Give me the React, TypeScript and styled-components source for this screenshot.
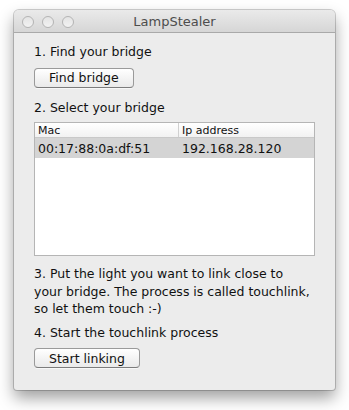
import styled, { createGlobalStyle } from 'styled-components';

type Bridge = {
  mac: string;
  ip: string;
};

const bridges: Bridge[] = [{ mac: '00:17:88:0a:df:51', ip: '192.168.28.120' }];

const GlobalStyle = createGlobalStyle`
  html, body {
    margin: 0;
    padding: 0;
    background: #ffffff;
  }
  body {
    font-family: "DejaVu Sans", "Liberation Sans", sans-serif;
  }
`;

const Page = styled.div`
  padding: 10px 0 0 14px;
  height: 410px;
  box-sizing: border-box;
`;

const Window = styled.div`
  width: 321px;
  height: 380px;
  background: #ececec;
  border-radius: 5px 5px 3px 3px;
  box-shadow: 0 0 0 1px rgba(0, 0, 0, 0.18), 0 8px 16px rgba(0, 0, 0, 0.38);
  display: flex;
  flex-direction: column;
  overflow: hidden;
`;

const TitleBar = styled.div`
  height: 22px;
  flex: none;
  display: flex;
  align-items: center;
  position: relative;
  background: linear-gradient(#eaeaea, #d6d6d6);
  border-bottom: 1px solid #a9a9a9;
`;

const Lights = styled.div`
  display: flex;
  gap: 8px;
  padding-left: 8px;
  padding-top: 1px;
`;

const Light = styled.span`
  width: 10px;
  height: 10px;
  border-radius: 50%;
  border: 1px solid #b4b4b4;
  background: linear-gradient(#e4e4e4, #f2f2f2);
`;

const Title = styled.div`
  position: absolute;
  left: 0;
  right: 0;
  text-align: center;
  font-size: 13px;
  color: #4d4d4d;
  pointer-events: none;
`;

const Content = styled.div`
  padding: 10px 20px 0 20px;
  display: flex;
  flex-direction: column;
  align-items: flex-start;
`;

const Label = styled.div<{ $gap?: number }>`
  font-size: 12.5px;
  line-height: 17.5px;
  color: #111;
  margin-top: ${(p) => p.$gap ?? 0}px;
`;

const Button = styled.button<{ $gap?: number }>`
  margin-top: ${(p) => p.$gap ?? 0}px;
  height: 20px;
  padding: 0 14px;
  font-family: inherit;
  font-size: 12.5px;
  color: #111;
  border: 1px solid #9a9a9a;
  border-bottom-color: #7c7c7c;
  border-radius: 4px;
  background: linear-gradient(#ffffff, #f4f4f4 50%, #eaeaea);
  box-shadow: 0 1px 0 rgba(255, 255, 255, 0.6);
`;

const Table = styled.div`
  margin-top: 6px;
  width: 281px;
  height: 134px;
  box-sizing: border-box;
  background: #fff;
  border: 1px solid #b5b5b5;
`;

const Row = styled.div<{ $header?: boolean; $selected?: boolean }>`
  display: grid;
  grid-template-columns: 143px 1fr;
  height: ${(p) => (p.$header ? 14 : 20)}px;
  align-items: center;
  font-size: ${(p) => (p.$header ? 11 : 12.5)}px;
  color: #111;
  background: ${(p) =>
    p.$header ? 'linear-gradient(#ffffff, #f2f2f2)' : p.$selected ? '#d4d4d4' : 'transparent'};
  border-bottom: ${(p) => (p.$header ? '1px solid #c9c9c9' : 'none')};
`;

const Cell = styled.div<{ $divider?: boolean }>`
  padding-left: 3px;
  height: 100%;
  display: flex;
  align-items: center;
  white-space: nowrap;

  &:nth-child(2) {
    border-left: 1px solid ${(p) => (p.$divider ? '#d0d0d0' : 'transparent')};
  }
`;

export default function App() {
  return (
    <>
      <GlobalStyle />
      <Page>
        <Window>
          <TitleBar>
            <Lights>
              <Light />
              <Light />
              <Light />
            </Lights>
            <Title>LampStealer</Title>
          </TitleBar>
          <Content>
            <Label>1. Find your bridge</Label>
            <Button $gap={7}>Find bridge</Button>
            <Label $gap={11}>2. Select your bridge</Label>
            <Table>
              <Row $header>
                <Cell>Mac</Cell>
                <Cell $divider>Ip address</Cell>
              </Row>
              {bridges.map((b) => (
                <Row key={b.mac} $selected>
                  <Cell>{b.mac}</Cell>
                  <Cell>{b.ip}</Cell>
                </Row>
              ))}
            </Table>
            <Label $gap={9}>
              3. Put the light you want to link close to
              <br />
              your bridge. The process is called touchlink,
              <br />
              so let them touch :-)
            </Label>
            <Label $gap={6}>4. Start the touchlink process</Label>
            <Button $gap={7}>Start linking</Button>
          </Content>
        </Window>
      </Page>
    </>
  );
}
